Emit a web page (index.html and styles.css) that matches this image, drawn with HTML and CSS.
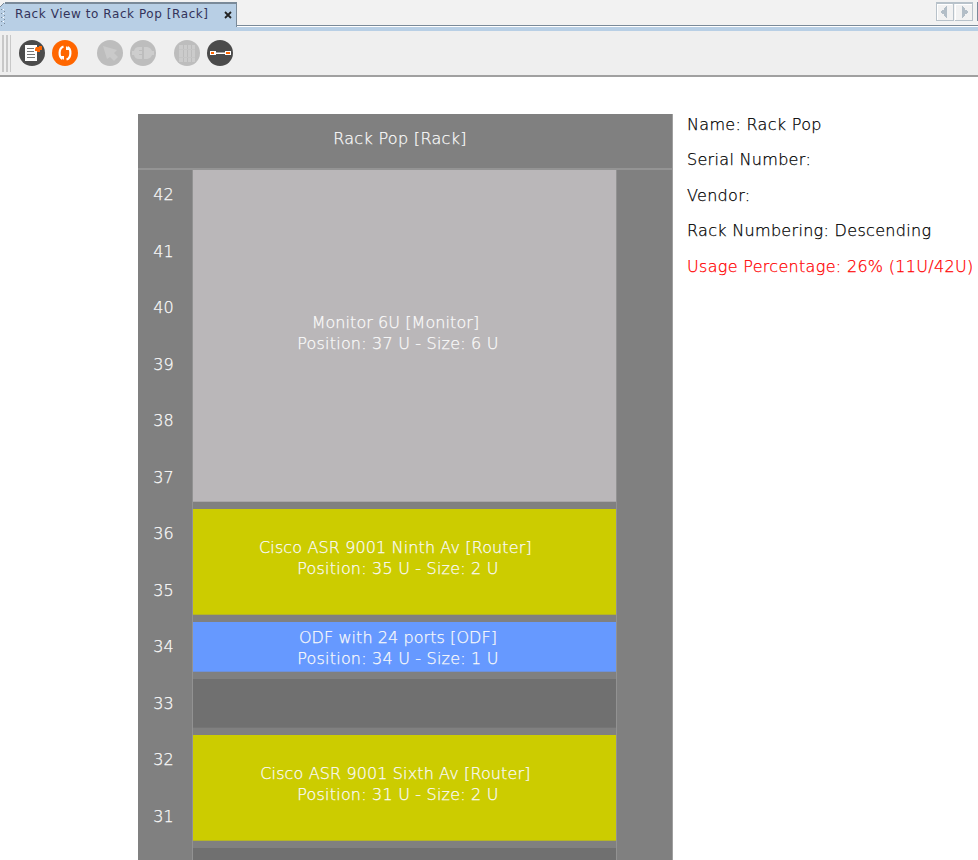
FILE: index.html
```
<!DOCTYPE html>
<html lang="en">
<head>
<meta charset="utf-8">
<title>Rack View</title>
<link rel="stylesheet" href="styles.css">
</head>
<body>
<header class="tabs">
  <div class="tab">
    <svg class="tab-shape" width="238" height="27" shape-rendering="crispEdges"><path d="M5 2H237V27H0V7z" fill="#b8cfe5"/><path d="M5 3.5H235" stroke="#fff" opacity=".5"/><path d="M0 7L4 3" stroke="#7a8a99"/><path d="M5 2h232v25h-1V4H5z" fill="#7a8a99"/><path d="M1.5 9v17M4.500 11v14" stroke="#7a8a99" stroke-dasharray="1 3"/><path d="M3.500 9v16" stroke="#fff" stroke-dasharray="1 3"/></svg>
    <span class="tab-label">Rack View to Rack Pop [Rack]</span>
    <svg class="close" width="8" height="8" viewBox="0 0 8 8"><path d="M1 1l6 6M7 1L1 7" stroke="#222" stroke-width="1.8"/></svg>
  </div>
  <div class="tab-rest">
    <svg width="42" height="21" shape-rendering="crispEdges"><path d="M0 2h37v2H0zM0 4h1v17H0zM17 4h1v17h-1zM1 20h17v1H1zM19 20h18v1H19zM36 4h1v17h-1z" fill="#b8c2ca"/><path d="M1.500 20V4.500H16M19.500 20V4.500H36" stroke="#fff" fill="none"/><path d="M11 6v12h-1v-1H9v-1H8v-2H6v-1H5v-2h1v-1h2V8h1V7h1V6zM26 6h1v1h1v1h1v2h2v1h1v2h-1v1h-2v2h-1v1h-1v1h-1z" fill="#b3bec7"/><path d="M41 2h1v19h-1z" fill="#7a8a99"/></svg>
  </div>
</header>
<nav class="toolbar">
  <span class="grip"></span>
  <svg class="tool" viewBox="0 0 26 26"><circle cx="13" cy="13" r="13" fill="#4b4b4b"/><path d="M6 5h12v16H6z" fill="#fff"/><path d="M8 8.500h7M8 11.500h7M8 14.500h8M8 17.500h8" stroke="#777"/><path d="M16 9l1-2h3V6h3v4h-2v2h-3v-1h-2z" fill="#ff6600"/></svg>
  <svg class="tool" viewBox="0 0 26 26"><circle cx="13" cy="13" r="13" fill="#ff6600"/><path d="M11.500 6.500C6.500 8 6.500 17 10.500 19M14.500 19.500C19.500 18 19.500 9 15.500 7" fill="none" stroke="#fff" stroke-width="2.200"/><path d="M8 16h4v4zM18 10h-4V6z" fill="#fff"/></svg>
  <svg class="tool gap" viewBox="0 0 26 26"><circle cx="13" cy="13" r="13" fill="#bdbdbd"/><path d="M6 6l14 4-3 3 4 4-4 4-4-4-3 2z" fill="#cacaca"/></svg>
  <svg class="tool" viewBox="0 0 26 26"><circle cx="13" cy="13" r="13" fill="#bdbdbd"/><path d="M12 7H9a5 5 0 0 0-5 4H2v4h2a5 5 0 0 0 5 4h3v-4H9v-1h3v-3H9v-1h3zM14 7h3a6 6 0 0 1 5 4h2v4h-2a6 6 0 0 1-5 4h-3z" fill="#cdcdcd"/></svg>
  <svg class="tool gap" viewBox="0 0 26 26"><circle cx="13" cy="13" r="13" fill="#bdbdbd"/><path d="M5 5h16v17H5z" fill="#cbcbcb"/><path d="M9.500 5v17M13.500 5v17M17.500 5v17" stroke="#bcbcbc"/><path d="M5 9.500h16M5 17.500h16" stroke="#c5c5c5"/></svg>
  <svg class="tool" viewBox="0 0 26 26"><circle cx="13" cy="13" r="13" fill="#4b4b4b"/><path d="M3 11h6v4H3zM18 11h6v4h-6zM9 12.500h9v1.500H9z" fill="#fff"/><path d="M4 12h3v2H4zM19 12h4v2h-4z" fill="#ff6600"/></svg>
</nav>
<main class="scene">
  <section class="rack">
    <h1 class="rack-title"><span>Rack Pop [Rack]</span></h1>
    <div class="rack-body">
      <ol class="numbers"><li>42</li><li>41</li><li>40</li><li>39</li><li>38</li><li>37</li><li>36</li><li>35</li><li>34</li><li>33</li><li>32</li><li>31</li></ol>
      <div class="slots">
        <div class="device u6 monitor"><p class="name">Monitor 6U [Monitor]&nbsp;</p><p>Position: 37 U - Size: 6 U</p></div>
        <div class="device u2 router"><p>Cisco ASR 9001 Ninth Av [Router]&nbsp;</p><p>Position: 35 U - Size: 2 U</p></div>
        <div class="device u1 odf"><p class="name">ODF with 24 ports [ODF]</p><p>Position: 34 U - Size: 1 U</p></div>
        <div class="device u1 free"></div>
        <div class="device u2 router"><p>Cisco ASR 9001 Sixth Av [Router]&nbsp;</p><p>Position: 31 U - Size: 2 U</p></div>
        <div class="device u1 free"></div>
      </div>
    </div>
  </section>
  <aside class="info">
    <p>Name: Rack Pop</p><p>Serial Number:</p><p>Vendor:</p><p>Rack Numbering: Descending</p><p class="usage">Usage Percentage: 26% (11U/42U)</p>
  </aside>
</main>
</body>
</html>
```

FILE: styles.css
```
* { box-sizing: border-box; }
body { margin: 0; height: 860px; overflow: hidden; background: #fff; font-family: "DejaVu Sans", sans-serif; font-weight: 200; font-size: 16px; }
p, h1, ol { margin: 0; padding: 0; font-weight: inherit; list-style: none; }
.tabs { display: flex; height: 31px; background: #f2f2f2; border-bottom: 4px solid #b8cfe5; }
.tab { position: relative; width: 237px; height: 27px; display: flex; align-items: center; padding: 0 0 1px 15px; background: #f2f2f2; }
.tab-shape { position: absolute; left: 0; top: 0; }
.tab-label { position: relative; width: 209px; padding-top: 1px; font-size: 12px; font-weight: 400; letter-spacing: 0.57px; color: #33335a; white-space: nowrap; }
.close { position: relative; margin-top: 3px; }
.tab-rest { flex: 1; height: 27px; border-bottom: 1px solid #fff; box-shadow: inset 0 -1px #7a8a99; display: flex; justify-content: flex-end; }
.toolbar { display: flex; align-items: center; height: 46px; background: #efefef; border-bottom: 2px solid #a0a0a0; }
.grip { width: 9px; height: 37px; margin: 0 8px 0 2px; background: repeating-linear-gradient(90deg, #c8c8c8 0 2px, #efefef 2px 4px); }
.tool { width: 26px; height: 26px; margin-right: 7px; }
.gap { margin-left: 11.5px; }
.scene { display: flex; padding: 37px 0 0 138px; height: 783px; -webkit-text-stroke: 0.25px; }
.rack { width: 535px; height: 746px; background: #808080; border-right: 1px solid #a0a0a0; color: #fafafa; overflow: hidden; }
.rack-title { height: 56px; border-bottom: 2px solid #949494; font-size: 16px; letter-spacing: 0.32px; text-align: center; line-height: 50px; padding-right: 10px; }
.rack-body { display: flex; }
.numbers { width: 54px; text-align: center; padding-right: 3px; }
.numbers li { height: 56.55px; line-height: 50px; }
.slots { width: 425px; border: solid #929292; border-width: 0 1px; }
.device { margin-bottom: 7px; display: flex; flex-direction: column; justify-content: center; text-align: center; line-height: 21px; padding-right: 13px; border-bottom: 1px solid rgba(128,128,128,.3); letter-spacing: 0.12px; white-space: nowrap; }
.device p + p { letter-spacing: 0.2px; }
.device .name { letter-spacing: 0.07px; }
.u1 { height: 49.55px; }
.u2 { height: 106.1px; }
.u6 { height: 332.2px; }
.monitor { background: #bab7b9; padding-bottom: 6px; }
.router { background: #cccc00; padding-bottom: 7px; }
.odf { background: #6699ff; padding-top: 3px; }
.free { background: #707070; }
.info { padding-left: 14px; line-height: 35.4px; margin-top: -7px; letter-spacing: 0.31px; white-space: nowrap; color: #000; }
.usage { color: #f00; }
```
